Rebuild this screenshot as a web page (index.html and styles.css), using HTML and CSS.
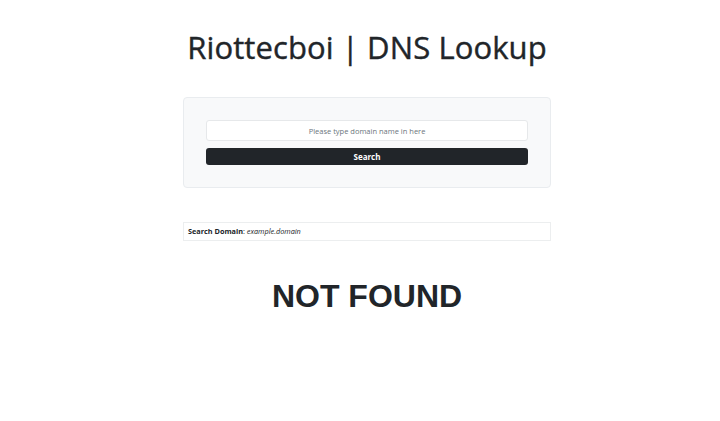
FILE: index.html
```html
<!DOCTYPE html>
<html lang="en">

<head>
    <meta charset="UTF-8">
    <meta name="viewport" content="width=device-width, initial-scale=1.0">
    <title>Riottecboi | DNS Lookup</title>
    <link rel="stylesheet" href="styles.css">
</head>

<body>
    <div class="container">
        <h1 class="title">Riottecboi | DNS Lookup</h1>
        <form class="search_card" action="javascript:void(0);">
            <input type="text" class="search_input" placeholder="Please type domain name in here" name="domain">
            <button type="submit" class="search_button">Search</button>
        </form>
        <div class="result_domain"><b>Search Domain</b>: <i>example.domain</i></div>
        <h2 class="not_found">NOT FOUND</h2>
    </div>
</body>

</html>
```

FILE: styles.css
```css
* {
    margin: 0;
    padding: 0;
    box-sizing: border-box;
}

body {
    padding-left: 14px;
    background-color: #fff;
    color: #212529;
    font-family: "Open Sans", "Noto Sans", sans-serif;
}

.container {
    display: flex;
    flex-direction: column;
    align-items: center;
    width: 368px;
    margin: 0 auto;
}

.title {
    margin-top: 26px;
    font-size: 31px;
    font-weight: 500;
    line-height: 42px;
    letter-spacing: 0.1px;
    -webkit-text-stroke: 0.4px #212529;
}

.search_card {
    display: flex;
    flex-direction: column;
    gap: 7px;
    width: 100%;
    margin-top: 29px;
    padding: 22px 22px 22px;
    background-color: #f8f9fa;
    border: 1px solid #e9ecef;
    border-radius: 4px;
}

.search_input {
    height: 21px;
    border: 1px solid #e6e8ea;
    border-radius: 3px;
    background-color: #fff;
    font-family: inherit;
    font-size: 7.5px;
    text-align: center;
    color: #212529;
}

.search_input::placeholder {
    color: #6c757d;
}

.search_button {
    height: 17px;
    border: none;
    border-radius: 3px;
    background-color: #212529;
    color: #fff;
    font-family: inherit;
    font-size: 8px;
    font-weight: 700;
}

.result_domain {
    width: 100%;
    height: 19px;
    margin-top: 34px;
    padding: 0 4px;
    border: 1px solid #eceeef;
    font-size: 7.3px;
    line-height: 17px;
}

.not_found {
    margin-top: 35px;
    font-family: "Liberation Sans", Arial, sans-serif;
    font-size: 32px;
    font-weight: 700;
    line-height: 40px;
}
```
